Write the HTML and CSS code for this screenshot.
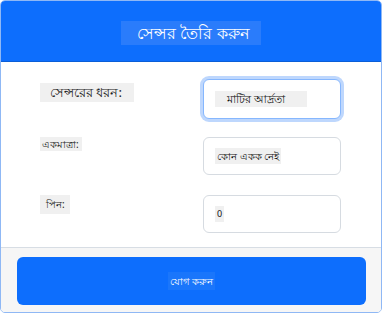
FILE: index.html
```html
<!DOCTYPE html>
<html lang="bn">
<head>
    <meta charset="UTF-8">
    <meta name="viewport" content="width=device-width, initial-scale=1.0">
    <title>সেন্সর তৈরি করুন</title>
    <link rel="stylesheet" href="styles.css">
</head>
<body>
    <div class="card">
        <div class="card-header">
            <h1 class="title">সেন্সর তৈরি করুন</h1>
        </div>

        <div class="card-body">
            <div class="form-row">
                <label class="label label-lg" for="sensorType">সেন্সরের ধরন:</label>
                <div class="field focused" id="sensorType">
                    <span class="value value-lg">মাটির আর্দ্রতা</span>
                </div>
            </div>

            <div class="form-row">
                <label class="label label-sm" for="unit">একমাত্রা:</label>
                <div class="field" id="unit">
                    <span class="value">কোন একক নেই</span>
                </div>
            </div>

            <div class="form-row">
                <label class="label label-pin" for="pin">পিন:</label>
                <div class="field" id="pin">
                    <span class="value value-sm">0</span>
                </div>
            </div>
        </div>

        <div class="card-footer">
            <button class="button"><span class="button-text">যোগ করুন</span></button>
        </div>
    </div>
</body>
</html>
```

FILE: styles.css
```css
* {
    margin: 0;
    padding: 0;
    box-sizing: border-box;
    font-family: 'Noto Sans', 'DejaVu Sans', sans-serif;
}

body {
    background-color: #ffffff;
    width: 383px;
    height: 314px;
    overflow: hidden;
}

.card {
    width: 382px;
    height: 313px;
    border: 1px solid #8fb8f5;
    border-radius: 5px;
    overflow: hidden;
    display: flex;
    flex-direction: column;
}

.card-header {
    background: #0d6efd;
    height: 61px;
    display: flex;
    justify-content: center;
    align-items: center;
    border-bottom: 1px solid #0b5ed7;
}

.title {
    background: #2a7cfb;
    color: #ffffff;
    font-size: 16px;
    font-weight: normal;
    padding: 0 11px 0 16px;
    line-height: 24px;
    margin-top: 3px;
}

.card-body {
    background: #ffffff;
    padding: 17px 40px 0 39px;
    height: 185px;
    flex: none;
}

.form-row {
    display: grid;
    grid-template-columns: 1fr 138px;
    height: 58px;
}

.label {
    align-self: start;
    justify-self: start;
    background: #f0f0f0;
    color: #222;
    font-size: 12px;
    line-height: 19px;
    padding: 0 2px;
}

.label-lg {
    font-size: 13px;
    padding: 0 12px 0 10px;
    margin-top: 4px;
}

.label-sm {
    font-size: 10px;
    line-height: 14px;
    padding: 0 3px 0 2px;
}

.label-pin {
    font-size: 10px;
    padding: 0 5px 0 6px;
}

.field {
    height: 38px;
    border: 1px solid #d6dbe1;
    border-radius: 6px;
    background: #ffffff;
    display: flex;
    align-items: center;
    padding-left: 11px;
}

.field.focused {
    height: 40px;
    border-color: #86b7fe;
    box-shadow: 0 0 0 3px #bed7fd;
}

.value {
    background: #f0f0f0;
    color: #111;
    font-size: 10px;
    line-height: 16px;
    padding: 0 2px;
}

.value-lg {
    padding: 0 22px 0 12px;
    font-size: 11px;
}

.value-sm {
    font-size: 9px;
}

.card-footer {
    background: #f6f6f6;
    border-top: 1px solid #d7dde4;
    flex: 1;
    padding: 9px 16px 0 16px;
}

.button {
    width: 349px;
    height: 48px;
    border: none;
    border-radius: 6px;
    background-color: #0d6efd;
    color: white;
    display: flex;
    justify-content: center;
    align-items: center;
}

.button-text {
    background: #1a76fb;
    font-size: 10px;
    line-height: 18px;
    padding: 0 2px;
}
```
